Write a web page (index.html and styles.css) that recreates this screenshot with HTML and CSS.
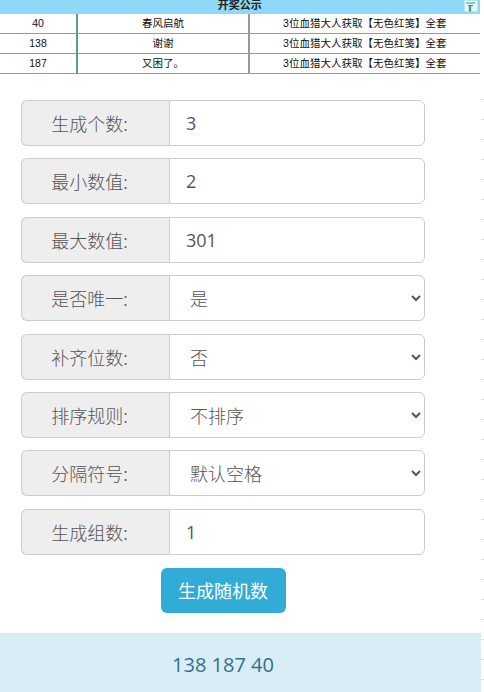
FILE: index.html
```html
<!DOCTYPE html>
<html lang="zh-CN">
<head>
<meta charset="utf-8">
<title>随机数生成</title>
<link rel="stylesheet" href="styles.css">
</head>
<body>
<div class="sheet-wrap">
  <table class="sheet">
    <colgroup><col class="w1"><col class="w2"><col class="w3"></colgroup>
    <tr class="sheet-head">
      <th colspan="3">开奖公示<span class="filter"><svg width="11" height="11" viewBox="0 0 11 11"><path d="M1 2h9M3 4.5h5M4.5 4.5v6M5.5 4.5v6" stroke="#1aa87a" stroke-width="1.2" fill="none"/></svg></span></th>
    </tr>
    <tr><td class="c1">40</td><td class="c2">春风启航</td><td class="c3">3位血猎大人获取【无色红笺】全套</td></tr>
    <tr><td class="c1">138</td><td class="c2">谢谢</td><td class="c3">3位血猎大人获取【无色红笺】全套</td></tr>
    <tr><td class="c1">187</td><td class="c2">又困了。</td><td class="c3">3位血猎大人获取【无色红笺】全套</td></tr>
  </table>
</div>

<main class="main">
  <form class="form">
    <div class="group"><span class="addon">生成个数:</span><input class="field" type="text" value="3"></div>
    <div class="group"><span class="addon">最小数值:</span><input class="field" type="text" value="2"></div>
    <div class="group"><span class="addon">最大数值:</span><input class="field" type="text" value="301"></div>
    <div class="group"><span class="addon">是否唯一:</span><select class="field sel"><option>是</option><option>否</option></select></div>
    <div class="group"><span class="addon">补齐位数:</span><select class="field sel"><option>否</option><option>是</option></select></div>
    <div class="group"><span class="addon">排序规则:</span><select class="field sel"><option>不排序</option></select></div>
    <div class="group"><span class="addon">分隔符号:</span><select class="field sel"><option>默认空格</option></select></div>
    <div class="group"><span class="addon">生成组数:</span><input class="field" type="text" value="1"></div>
    <div class="actions"><button type="button" class="btn">生成随机数</button></div>
  </form>
</main>

<div class="result"><div class="result-text">138 187 40</div></div>
<div class="edge"></div>
</body>
</html>
```

FILE: styles.css
```css
html, body {
  margin: 0;
  padding: 0;
  background: #fff;
}
body {
  width: 484px;
  height: 692px;
  overflow: hidden;
  position: relative;
  font-family: "Open Sans", "Noto Sans CJK SC", sans-serif;
  color: #555;
}

.sheet-wrap {
  height: 74px;
  overflow: hidden;
  width: 480px;
}
.sheet {
  margin-top: -6px;
  width: 480px;
  border-collapse: collapse;
  table-layout: fixed;
  font-family: "Liberation Sans", "Noto Sans CJK SC", sans-serif;
  font-size: 10.5px;
  color: #111;
}
.w1 { width: 77px; }
.w2 { width: 172px; }
.w3 { width: 231px; }
.sheet-head th {
  height: 20px;
  padding: 0;
  background: #8fd8f7;
  font-size: 11px;
  font-weight: bold;
  color: #222;
  text-align: center;
  position: relative;
  border-right: 1px solid #555;
}
.filter {
  position: absolute;
  right: 2px;
  top: 6px;
  width: 14px;
  height: 12px;
  background: #e6f7f4;
  border: 1px solid #bfe3e6;
  box-sizing: border-box;
  display: flex;
  align-items: center;
  justify-content: center;
}
.sheet td {
  height: 19px;
  padding: 0;
  text-align: center;
  border-bottom: 1px solid #9a9a9a;
  line-height: 19px;
  white-space: nowrap;
  overflow: hidden;
}
.sheet .c1 { border-right: 2px solid #5c9c8e; }
.sheet .c2 { border-right: 2px solid #9a9a9a; }
.sheet .c3 { border-right: 1px solid #444; }

.main {
  width: 446px;
  box-sizing: border-box;
  padding: 26px 21px 0;
}
.form {
  display: flex;
  flex-direction: column;
  gap: 12.4px;
}
.group {
  display: flex;
  height: 46px;
}
.addon {
  width: 148px;
  flex: none;
  box-sizing: border-box;
  background: #eee;
  border: 1px solid #ccc;
  border-right: none;
  border-radius: 6px 0 0 6px;
  display: flex;
  align-items: center;
  justify-content: center;
  padding-right: 12px;
  font-family: "Noto Sans CJK SC", sans-serif;
  font-weight: 300;
  font-size: 18px;
  color: #555;
}
.field {
  flex: 1;
  min-width: 0;
  height: 46px;
  box-sizing: border-box;
  border: 1px solid #ccc;
  border-radius: 0 6px 6px 0;
  padding: 0 16px;
  font-family: "Open Sans", "Noto Sans CJK SC", sans-serif;
  font-size: 18px;
  color: #555;
  background: #fff;
  outline: none;
  margin: 0;
}
.sel {
  padding: 0 10px 0 16px;
  font-family: "Noto Sans CJK SC", sans-serif;
  font-weight: 300;
}
.actions {
  display: flex;
  justify-content: center;
  padding-top: 0.6px;
}
.btn {
  width: 125px;
  height: 45px;
  border: none;
  border-radius: 6px;
  background: #31acd6;
  color: #fff;
  font-family: "Noto Sans CJK SC", sans-serif;
  font-size: 18px;
  padding: 0;
}

.result {
  margin-top: 20px;
  width: 481px;
  height: 60px;
  background: #d9edf7;
}
.result-text {
  width: 446px;
  text-align: center;
  padding-top: 19px;
  font-family: "Open Sans", sans-serif;
  font-size: 20px;
  line-height: 26px;
  color: #31708f;
}

.edge {
  position: absolute;
  right: 0;
  top: 80px;
  width: 3px;
  height: 612px;
  background: repeating-linear-gradient(to bottom, transparent 0 19px, #ddd 19px 20px);
}
```
